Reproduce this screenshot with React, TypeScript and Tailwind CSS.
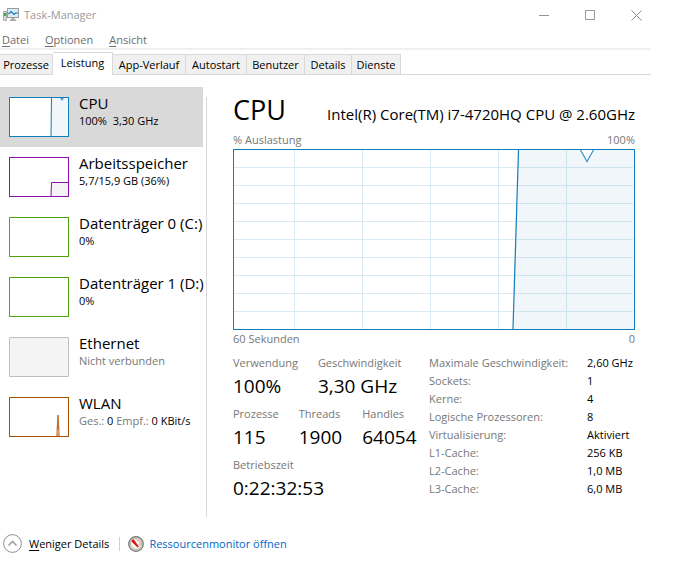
import { useState } from 'react';
import type { ReactNode } from 'react';

interface Device {
  name: string;
  detail: ReactNode;
  border: string;
  graph?: ReactNode;
}

const MENU = ['Datei', 'Optionen', 'Ansicht'];

const TABS = [
  { label: 'Prozesse', width: 'w-[53px]' },
  { label: 'Leistung', width: 'w-[60px]' },
  { label: 'App-Verlauf', width: 'w-[73px]' },
  { label: 'Autostart', width: 'w-[61px]' },
  { label: 'Benutzer', width: 'w-[58px]' },
  { label: 'Details', width: 'w-[47px]' },
  { label: 'Dienste', width: 'w-[49px]' },
];

const DEVICES: Device[] = [
  {
    name: 'CPU',
    detail: '100%  3,30 GHz',
    border: 'border-[#117dbb] bg-white',
    graph: (
      <>
        <path d="M41 38L42 0H58V38Z" fill="#f1f6fa" />
        <path d="M41 38L41.5 0" stroke="#117dbb" />
        <path d="M50 0H54L52 3Z" fill="#4c9ccb" />
      </>
    ),
  },
  {
    name: 'Arbeitsspeicher',
    detail: '5,7/15,9 GB (36%)',
    border: 'border-[#8b12ae] bg-white',
    graph: (
      <path d="M41 38L41.5 24.5H59V39" fill="#f4f2f4" stroke="#8b12ae" />
    ),
  },
  { name: 'Datenträger 0 (C:)', detail: '0%', border: 'border-[#4da60c] bg-white' },
  { name: 'Datenträger 1 (D:)', detail: '0%', border: 'border-[#4da60c] bg-white' },
  {
    name: 'Ethernet',
    detail: <span className="text-[#777777]">Nicht verbunden</span>,
    border: 'border-[#bfbfbf] bg-[#f4f4f4] rounded-[1px]',
  },
  {
    name: 'WLAN',
    detail: (
      <>
        <span className="text-[#777777]">Ges.:</span> 0 <span className="text-[#777777]">Empf.:</span> 0 KBit/s
      </>
    ),
    border: 'border-[#a74f01] bg-white',
    graph: (
      <>
        <path d="M46 38L47.5 17H48.5L50 38Z" fill="#dc9a6c" />
        <path d="M48 17V32" stroke="#a74f01" />
      </>
    ),
  },
];

const STATS = [
  [
    { label: 'Verwendung', value: '100%' },
    { label: 'Geschwindigkeit', value: '3,30 GHz' },
  ],
  [
    { label: 'Prozesse', value: '115' },
    { label: 'Threads', value: '1900' },
    { label: 'Handles', value: '64054' },
  ],
  [{ label: 'Betriebszeit', value: '0:22:32:53' }],
];

const SPECS = [
  ['Maximale Geschwindigkeit:', '2,60 GHz'],
  ['Sockets:', '1'],
  ['Kerne:', '4'],
  ['Logische Prozessoren:', '8'],
  ['Virtualisierung:', 'Aktiviert'],
  ['L1-Cache:', '256 KB'],
  ['L2-Cache:', '1,0 MB'],
  ['L3-Cache:', '6,0 MB'],
];

function AppIcon() {
  return (
    <svg className="w-4 h-4" viewBox="0 0 16 16" fill="none">
      <path d="M0.5 4.5H3.5V13.5H0.5Z" fill="#dcdcdc" stroke="#a9a9a9" />
      <path d="M1 7.5H3" stroke="#2fb043" strokeWidth="3" />
      <rect x="4.5" y="1.5" width="11" height="9" fill="#d7eefa" stroke="#9c9c9c" />
      <path d="M5.5 7L8 4.5L11 7.5L12.5 6H15" stroke="#1b75ad" strokeWidth="1.2" />
      <path d="M8.5 11H11.5V12.5H13V14H7V12.5H8.5Z" fill="#a8a8a8" />
    </svg>
  );
}

function MonitorIcon() {
  return (
    <svg className="w-4 h-4" viewBox="0 0 16 16" fill="none">
      <circle cx="8" cy="8" r="7.3" fill="#d8d6d2" stroke="#77746f" strokeWidth="1.2" />
      <circle cx="8" cy="8" r="5.4" fill="#faf8f5" stroke="#a9a39b" strokeWidth="0.8" />
      <path d="M8.5 4.3C11.5 4.5 12.5 7 11.8 9.5" stroke="#e3a27c" />
      <path d="M3.8 3.4L6 3.8L10.8 10.6L9.6 11.4L4 6Z" fill="#d31313" />
    </svg>
  );
}

function UsageChart() {
  return (
    <div className="h-[181px] border border-[#117dbb]">
      <svg className="block w-full h-full" viewBox="0 0 400 179" preserveAspectRatio="none" fill="none">
        <path d="M279 179L284.5 0H400V179Z" fill="#f1f6fa" />
        {[60, 128, 196, 264, 332].map((x) => (
          <path key={x} d={`M${x + 0.5} 0V179`} stroke={x > 284 ? '#cee3f0' : '#d9eaf4'} />
        ))}
        {[17, 35, 53, 71, 89, 107, 125, 143, 161].map((y) => (
          <g key={y}>
            <path d={`M0 ${y + 0.5}H284`} stroke="#d9eaf4" />
            <path d={`M284 ${y + 0.5}H399`} stroke="#cee3f0" />
          </g>
        ))}
        <path d="M279 179L284.5 0" stroke="#117dbb" strokeWidth="1.2" />
        <path d="M346.5 0L353 11.5L359.5 0" fill="#ffffff" stroke="#3a91c5" strokeWidth="1.2" />
      </svg>
    </div>
  );
}

export default function App() {
  const [tab, setTab] = useState('Leistung');
  const [device, setDevice] = useState('CPU');

  return (
    <div className="min-h-screen bg-white pr-[23px] font-['Open_Sans','Noto_Sans',sans-serif] text-[11px] leading-[18px] text-black">
      {/* Title bar */}
      <header className="flex h-[30px] items-center justify-between pl-[3px]">
        <div className="flex items-center gap-[5px] text-[#999999]">
          <AppIcon />
          <span>Task-Manager</span>
        </div>
        <div className="flex gap-4">
          <button aria-label="Minimieren" className="flex h-7 w-[30px] items-center justify-center">
            <svg className="h-[11px] w-[11px]" viewBox="0 0 11 11" stroke="#999999"><path d="M0 5.5H10" /></svg>
          </button>
          <button aria-label="Maximieren" className="flex h-7 w-[30px] items-center justify-center">
            <svg className="h-[11px] w-[11px]" viewBox="0 0 11 11" fill="none" stroke="#999999"><path d="M0.5 0.5H9.5V9.5H0.5Z" /></svg>
          </button>
          <button aria-label="Schließen" className="flex h-7 w-[30px] items-center justify-center">
            <svg className="h-[11px] w-[11px]" viewBox="0 0 11 11" stroke="#888888"><path d="M0.5 0.5L10.5 10.5M10.5 0.5L0.5 10.5" /></svg>
          </button>
        </div>
      </header>

      <nav className="flex h-5 gap-4 border-b-2 border-[#f0f0f0] pl-[2px] text-[#6d6d6d]">
        {MENU.map((item) => (
          <button key={item} className="h-5 leading-5">
            <span className="underline underline-offset-2">{item[0]}</span>{item.slice(1)}
          </button>
        ))}
      </nav>

      {/* Tabs */}
      <div role="tablist" className="flex h-[25px] items-end border-b border-[#d9d9d9] pt-[2px]">
        {TABS.map(({ label, width }) => (
          <button
            key={label}
            role="tab"
            aria-selected={tab === label}
            onClick={() => setTab(label)}
            className={`${width} shrink-0 whitespace-nowrap border-r border-t border-[#d9d9d9] ${
              tab === label ? '-mb-px h-[23px] bg-white pb-[2px]' : 'h-5 bg-[#f0f0f0]'
            }`}
          >
            {label}
          </button>
        ))}
      </div>

      <main className="flex pt-3">
        {/* Device list */}
        <aside className="w-[203px] shrink-0">
          {DEVICES.map((d) => (
            <button
              key={d.name}
              onClick={() => setDevice(d.name)}
              className={`flex h-[60px] w-full items-start gap-[10px] pl-[9px] pt-[10px] text-left ${
                device === d.name ? 'bg-[#d9d9d9]' : ''
              }`}
            >
              <span className={`h-10 w-[60px] shrink-0 border ${d.border}`}>
                <svg className="block h-full w-full" viewBox="0 0 58 38" fill="none">{d.graph}</svg>
              </span>
              <span className="-mt-1 whitespace-pre">
                <span className="block text-[15px] leading-5">{d.name}</span>
                <span className="block leading-4">{d.detail}</span>
              </span>
            </button>
          ))}
        </aside>

        <section className="ml-[3px] mt-[10px] min-h-[420px] flex-1 border-l border-[#d9d9d9] pl-[26px] pr-4">
          <div className="flex h-[34px] items-baseline justify-between whitespace-nowrap">
            <h1 className="text-[27px] leading-[26px]">CPU</h1>
            <h2 className="text-[15px]">Intel(R) Core(TM) i7-4720HQ CPU @ 2.60GHz</h2>
          </div>
          <div className="flex justify-between text-[#777777]">
            <span>% Auslastung</span>
            <span>100%</span>
          </div>
          <UsageChart />
          <div className="flex justify-between text-[#777777]">
            <span>60 Sekunden</span>
            <span>0</span>
          </div>

          <div className="flex justify-between pt-[6px]">
            <div className="flex flex-col gap-[5px]">
              {STATS.map((row) => (
                <dl key={row[0].label} className="flex gap-5 whitespace-nowrap">
                  {row.map((s) => (
                    <div key={s.label}>
                      <dt className="text-[#777777]">{s.label}</dt>
                      <dd className="text-[19px] leading-7">{s.value}</dd>
                    </div>
                  ))}
                </dl>
              ))}
            </div>
            <table className="h-36 w-[206px] text-left">
              <tbody>
                {SPECS.map(([label, value]) => (
                  <tr key={label}>
                    <th scope="row" className="whitespace-nowrap p-0 font-normal text-[#777777]">{label}</th>
                    <td className="w-12 whitespace-nowrap p-0">{value}</td>
                  </tr>
                ))}
              </tbody>
            </table>
          </div>
        </section>
      </main>

      <footer className="flex items-center pl-[3px] pt-[17px]">
        <button className="flex items-center gap-[7px]">
          <svg className="h-[19px] w-[19px]" viewBox="0 0 19 19" fill="none">
            <circle cx="9.5" cy="9.5" r="8.9" stroke="#8f8f8f" />
            <path d="M5.5 11.5L9.5 7.5L13.5 11.5" stroke="#a0a0a0" strokeWidth="1.6" />
          </svg>
          <span><span className="underline underline-offset-2">W</span>eniger Details</span>
        </button>
        <span className="ml-[10px] mr-2 h-[14px] w-px bg-[#d0d0d0]" />
        <a href="#" className="flex items-center gap-[5px] text-[#0066cc]">
          <MonitorIcon />
          Ressourcenmonitor öffnen
        </a>
      </footer>
    </div>
  );
}
